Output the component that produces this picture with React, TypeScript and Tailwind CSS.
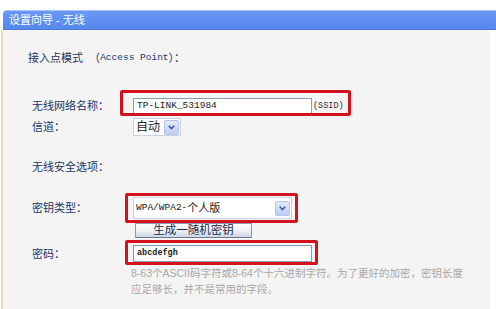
import React from "react";

const cjk = "font-['Liberation_Sans','Noto_Sans_CJK_SC',sans-serif]";
const mono = "font-['Liberation_Mono','Noto_Sans_CJK_SC',monospace]";

function Label({ children }: { children: React.ReactNode }) {
  return (
    <div className="w-[105px] shrink-0 pl-[4px] text-[11px] leading-[14px] text-[#1b3566]">
      {children}
    </div>
  );
}

function ArrowButton({ h }: { h: string }) {
  return (
    <div
      className={`w-[15px] ${h} flex items-center justify-center border border-[#b5c5e8] bg-gradient-to-b from-[#e1e9fc] to-[#bccdf5] rounded-[2px]`}
    >
      <svg width="7" height="5" viewBox="0 0 7 5">
        <path d="M0.8 0.8 L3.5 3.6 L6.2 0.8" fill="none" stroke="#3b5a9a" strokeWidth="1.6" />
      </svg>
    </div>
  );
}

// red annotation frames laid over the form
function Mark({ className }: { className: string }) {
  return (
    <div
      className={`absolute border-[3px] border-[#d3121d] rounded-[2px] pointer-events-none ${className}`}
    />
  );
}

export default function App() {
  return (
    <div className={`relative w-[496px] h-[309px] bg-white overflow-hidden ${cjk}`}>
      <div className="pt-[10px] pl-[1px]">
        {/* title bar */}
        <div className="h-[20px] ml-[2px] rounded-tl-[4px] border-t border-[#a9c4f6] bg-gradient-to-b from-[#6a98f3] to-[#5487ee] border-b border-b-[#4c78d6] flex items-center pl-[6px]">
          <span className="text-[11px] text-white">设置向导 - 无线</span>
        </div>

        {/* form body */}
        <div className="h-[279px] mr-[6px] border-l-[2px] border-[#efdcb4] bg-[#f4f4f4] pl-[25px] flex flex-col">
          <div className="mt-[21px] h-[14px] text-[11px] leading-[14px] text-[#1b3566] flex items-center">
            <span>接入点模式&nbsp;&nbsp;（</span>
            <span className={`${mono} text-[9.5px]`}>Access Point</span>
            <span>）：</span>
          </div>

          {/* SSID */}
          <div className="mt-[33px] flex items-center h-[16px]">
            <Label>无线网络名称：</Label>
            <div className="w-[179px] h-[16px] bg-white border border-[#8a9bb3] flex items-center pl-[3px]">
              <span className={`${mono} text-[9.5px] text-[#222]`}>TP-LINK_531984</span>
            </div>
            <span className={`${mono} text-[8.5px] text-[#333] ml-[1px]`}>(SSID)</span>
          </div>

          {/* channel */}
          <div className="mt-[4px] flex items-center h-[18px]">
            <Label>信道：</Label>
            <div className="h-[18px] flex items-center bg-white border border-[#c9d3e3] pl-[2px] pr-[1px] gap-[1px]">
              <span className="text-[12px] text-[#222] w-[27px]">自动</span>
              <ArrowButton h="h-[15px]" />
            </div>
          </div>

          <div className="mt-[24px] h-[14px] flex items-center">
            <Label>无线安全选项：</Label>
          </div>

          {/* key type */}
          <div className="mt-[23px] flex items-center h-[22px]">
            <Label>密钥类型：</Label>
            <div className="w-[159px] h-[22px] bg-white border border-[#c9d3e3] flex items-center justify-between pl-[2px] pr-[1px]">
              <span className="text-[11px] text-[#222] flex items-center">
                <span className={`${mono} text-[9.5px]`}>WPA/WPA2-</span>
                <span>个人版</span>
              </span>
              <ArrowButton h="h-[15px]" />
            </div>
          </div>

          {/* generate button */}
          <div className="mt-[4px] flex h-[15px]">
            <div className="w-[107px] shrink-0" />
            <div className="w-[117px] h-[15px] border border-[#8f9bb0] border-b-[#6d7890] bg-gradient-to-b from-[#fdfdfd] via-[#eef1f7] to-[#cfd6e4] flex items-center justify-center">
              <span className="text-[11.5px] leading-[13px] text-[#1b2a4a]">生成一随机密钥</span>
            </div>
          </div>

          {/* password */}
          <div className="mt-[7px] flex items-center h-[17px]">
            <Label>密码：</Label>
            <div className="w-[179px] h-[17px] bg-white border border-[#8a9bb3] flex items-center pl-[3px]">
              <span className={`${mono} text-[8.5px] font-bold text-[#222]`}>abcdefgh</span>
            </div>
          </div>

          <div className="mt-[3px] pl-[103px] text-[10.5px] leading-[16px] text-[#a8a8a8] whitespace-nowrap">
            8-63个ASCII码字符或8-64个十六进制字符。为了更好的加密，密钥长度
            <br />
            应足够长，并不是常用的字段。
          </div>
        </div>
      </div>

      <Mark className="left-[120px] top-[90px] w-[231px] h-[26px]" />
      <Mark className="left-[125px] top-[193px] w-[173px] h-[30px]" />
      <Mark className="left-[125px] top-[240px] w-[193px] h-[25px]" />
    </div>
  );
}
